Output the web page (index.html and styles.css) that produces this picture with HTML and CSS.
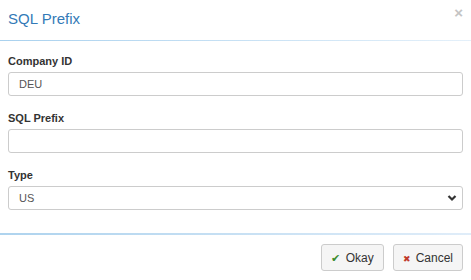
FILE: index.html
```html
<!doctype html>
<html lang="en">
  <head>
    <meta charset="utf-8" />
    <title>SQL Prefix</title>
    <link rel="stylesheet" href="styles.css">
  </head>
  <body>
    <div class="modal">
      <div class="modal-header">
        <h3 class="modal-title">SQL Prefix</h3>
        <span class="close">&times;</span>
      </div>
      <div class="modal-body">
        <div class="form-group">
          <label>Company ID</label>
          <div class="form-control">DEU</div>
        </div>
        <div class="form-group">
          <label>SQL Prefix</label>
          <div class="form-control"></div>
        </div>
        <div class="form-group">
          <label>Type</label>
          <div class="form-control select">
            <span>US</span>
            <svg width="10" height="8" viewBox="0 0 10 8"><path d="M1.5 2 L5 5.5 L8.5 2" fill="none" stroke="#333" stroke-width="2.2"/></svg>
          </div>
        </div>
      </div>
      <div class="modal-footer">
        <button class="btn"><span class="ok-icon">&#10004;</span>Okay</button>
        <button class="btn"><span class="cancel-icon">&#10006;</span>Cancel</button>
      </div>
    </div>
  </body>
</html>
```

FILE: styles.css
```css
body {
  margin: 0;
  font-family: "Liberation Sans", Arial, sans-serif;
  background-color: #fff;
  color: #333;
}

.modal {
  width: 471px;
  height: 280px;
}

.modal-header {
  position: relative;
  height: 40px;
  padding: 0 8px;
  display: flex;
  align-items: center;
  border-bottom: 1px solid transparent;
  border-image: linear-gradient(to right, #a9d1ee, #e4f0fa) 1;
}

.modal-title {
  margin: 0;
  font-size: 15px;
  font-weight: normal;
  color: #337ab7;
  padding-bottom: 4px;
}

.close {
  position: absolute;
  right: 8px;
  top: 4px;
  font-size: 15px;
  font-weight: bold;
  color: #c4c4c4;
}

.modal-body {
  padding: 14px 8px 0;
  height: 178px;
}

.form-group {
  margin-bottom: 16px;
}

.form-group label {
  display: block;
  font-size: 11px;
  line-height: 13px;
  font-weight: bold;
  color: #333;
  margin-bottom: 4px;
}

.form-control {
  box-sizing: border-box;
  height: 24px;
  border: 1px solid #ccc;
  border-radius: 3px;
  padding: 0 10px;
  font-size: 11px;
  color: #555;
  display: flex;
  align-items: center;
}

.select {
  justify-content: space-between;
  padding-right: 5px;
}

.modal-footer {
  height: 45px;
  border-top: 2px solid transparent;
  border-image: linear-gradient(to right, #aed3ee, #e0edf9) 1;
  display: flex;
  justify-content: flex-end;
  align-items: center;
  gap: 9px;
  padding: 0 8px;
}

.btn {
  height: 27px;
  padding: 0 9px;
  background-color: #f5f5f5;
  border: 1px solid #ccc;
  border-radius: 3px;
  font-family: "Liberation Sans", Arial, sans-serif;
  font-size: 12px;
  color: #333;
}

.ok-icon {
  color: #3c8d2f;
  font-size: 11px;
  margin-right: 6px;
}

.cancel-icon {
  color: #c0392b;
  font-size: 9px;
  margin-right: 5px;
}
```
